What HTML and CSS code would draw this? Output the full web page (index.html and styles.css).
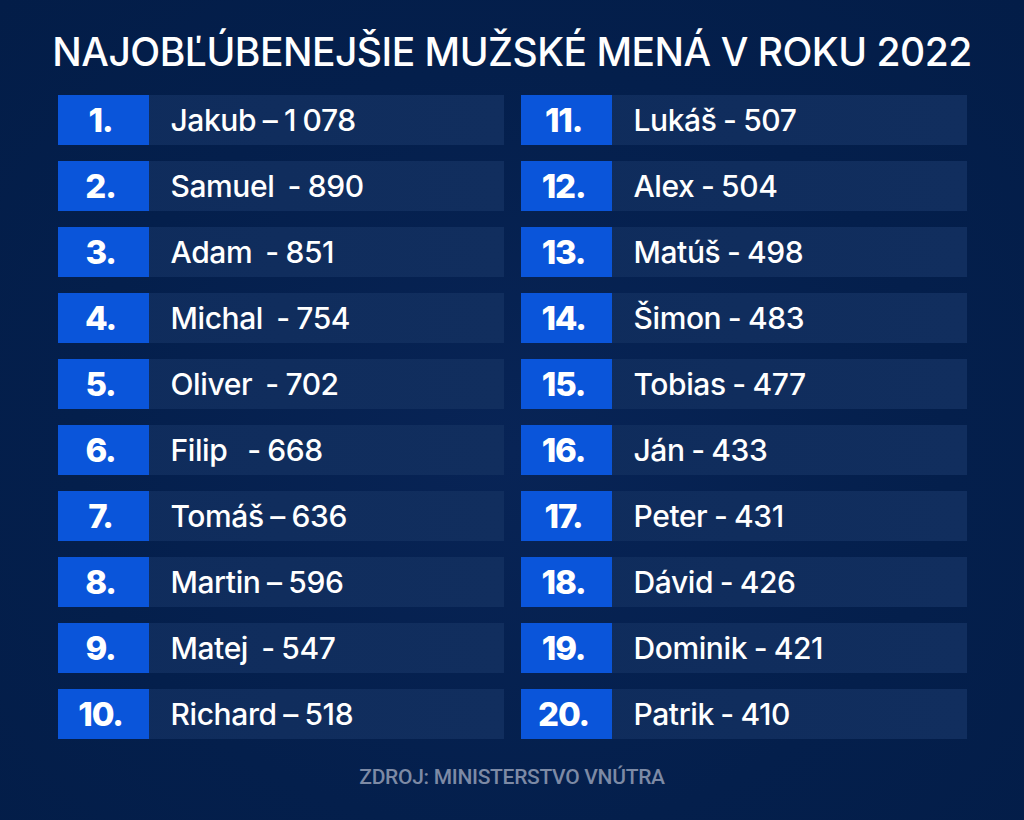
FILE: index.html
```html
<!DOCTYPE html>
<html lang="sk">
<head>
<meta charset="utf-8">
<link rel="stylesheet" href="styles.css">
</head>
<body>
<main class="page">
  <h1 class="title">NAJOBĽÚBENEJŠIE MUŽSKÉ MENÁ V ROKU 2022</h1>
  <ol class="list">
    <li class="row"><span class="num">1.</span><span class="name">Jakub – 1 078</span></li>
    <li class="row"><span class="num">2.</span><span class="name">Samuel&nbsp; - 890</span></li>
    <li class="row"><span class="num">3.</span><span class="name">Adam&nbsp; - 851</span></li>
    <li class="row"><span class="num">4.</span><span class="name">Michal&nbsp; - 754</span></li>
    <li class="row"><span class="num">5.</span><span class="name">Oliver&nbsp; - 702</span></li>
    <li class="row"><span class="num">6.</span><span class="name">Filip &nbsp; - 668</span></li>
    <li class="row"><span class="num">7.</span><span class="name">Tomáš – 636</span></li>
    <li class="row"><span class="num">8.</span><span class="name">Martin – 596</span></li>
    <li class="row"><span class="num">9.</span><span class="name">Matej&nbsp; - 547</span></li>
    <li class="row"><span class="num">10.</span><span class="name">Richard – 518</span></li>
    <li class="row"><span class="num">11.</span><span class="name">Lukáš - 507</span></li>
    <li class="row"><span class="num">12.</span><span class="name">Alex - 504</span></li>
    <li class="row"><span class="num">13.</span><span class="name">Matúš - 498</span></li>
    <li class="row"><span class="num">14.</span><span class="name">Šimon - 483</span></li>
    <li class="row"><span class="num">15.</span><span class="name">Tobias - 477</span></li>
    <li class="row"><span class="num">16.</span><span class="name">Ján - 433</span></li>
    <li class="row"><span class="num">17.</span><span class="name">Peter - 431</span></li>
    <li class="row"><span class="num">18.</span><span class="name">Dávid - 426</span></li>
    <li class="row"><span class="num">19.</span><span class="name">Dominik - 421</span></li>
    <li class="row"><span class="num">20.</span><span class="name">Patrik - 410</span></li>
  </ol>
  <p class="source">ZDROJ: MINISTERSTVO VNÚTRA</p>
</main>
</body>
</html>
```
FILE: styles.css
```css
html, body {
  margin: 0;
  padding: 0;
}
body {
  width: 1024px;
  height: 820px;
  overflow: hidden;
  background: radial-gradient(ellipse at 50% 55%, #082456 0%, #041f4c 60%, #031d48 100%);
  font-family: Inter, "Open Sans", sans-serif;
  color: #ffffff;
}
.page {
  display: flex;
  flex-direction: column;
  align-items: center;
  padding-top: 28px;
}
.title {
  margin: 0;
  font-size: 39px;
  line-height: 48px;
  font-weight: 500;
  letter-spacing: -0.5px;
  white-space: nowrap;
}
.list {
  list-style: none;
  margin: 19px 0 0 0;
  padding: 0;
  display: grid;
  grid-template-columns: 446px 446px;
  grid-template-rows: repeat(10, 50px);
  grid-auto-flow: column;
  column-gap: 17px;
  row-gap: 16px;
}
.row {
  display: flex;
  align-items: stretch;
  background: linear-gradient(90deg, #0f2c5c 0%, #112e5e 100%);
}
.num {
  flex: 0 0 91px;
  display: flex;
  align-items: center;
  justify-content: center;
  background: #0a55da;
  font-size: 33px;
  font-weight: 800;
  letter-spacing: -1.2px;
  padding: 0 5px 1px 0;
  box-sizing: border-box;
}
.name {
  display: flex;
  align-items: center;
  padding-left: 22px;
  font-size: 30px;
  font-weight: 500;
  letter-spacing: -0.4px;
  word-spacing: -1px;
  white-space: pre;
}
.source {
  margin: 26px 0 0 0;
  font-family: Roboto, "Liberation Sans", sans-serif;
  font-size: 21px;
  line-height: 24px;
  font-weight: 500;
  color: #7d8aa5;
  letter-spacing: -0.3px;
}
```
